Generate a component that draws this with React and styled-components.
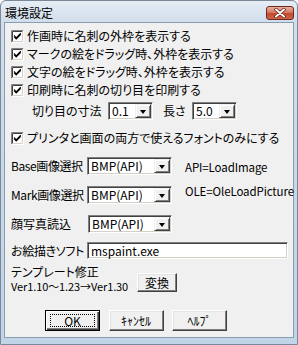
import React from 'react';
import styled, { createGlobalStyle } from 'styled-components';

const Global = createGlobalStyle`
  html, body { margin: 0; padding: 0; }
  body { width: 298px; height: 345px; overflow: hidden; background: #fff; }
`;

const Window = styled.div`
  width: 298px;
  height: 345px;
  box-sizing: border-box;
  display: flex;
  flex-direction: column;
  border: 1px solid #7a8899;
  border-radius: 6px 6px 0 0;
  background: linear-gradient(to bottom, #e6edf5 0px, #d2deeb 20px, #c6d7e9 60%, #c2d4e8 100%);
  font-family: "Noto Sans CJK JP", sans-serif;
  font-size: 12px;
  color: #000;
  font-feature-settings: "palt";
  overflow: hidden;
`;

const TitleBar = styled.div`
  height: 21px;
  flex: none;
  display: flex;
  align-items: center;
  justify-content: space-between;
  padding: 0 3px 0 4px;
`;

const Title = styled.span`
  font-size: 12px;
  line-height: 14px;
  padding-top: 3px;
  color: #000;
`;

const CloseBtn = styled.div`
  width: 28px;
  height: 14px;
  margin-top: 2px;
  box-sizing: border-box;
  border: 1px solid #6b2a1c;
  border-radius: 3px;
  background: linear-gradient(to bottom, #e8b0a0 0%, #d77a62 45%, #c24a2e 55%, #d0654a 100%);
  display: flex;
  align-items: center;
  justify-content: center;
`;

const Client = styled.div`
  flex: 1;
  margin: 0 3px 6px 3px;
  border: 1px solid #8a9cb0;
  background: #f0f0f0;
  display: flex;
  flex-direction: column;
  padding: 4px 0 0 6px;
`;

const CheckRow = styled.label`
  height: 18px;
  display: flex;
  align-items: center;
  gap: 3px;
  line-height: 14px;
  margin-top: ${p => p.mt || 0}px;
  white-space: nowrap;
`;

const Box = styled.span`
  width: 13px;
  height: 13px;
  flex: none;
  display: block;
`;

const Row = styled.div`
  display: flex;
  align-items: center;
  height: ${p => p.h || 18}px;
  margin-top: ${p => p.mt || 0}px;
  padding-left: ${p => p.pl || 0}px;
  white-space: nowrap;
`;

const Label = styled.span`
  width: ${p => p.w}px;
  margin-left: ${p => p.ml || 0}px;
  flex: none;
  line-height: 14px;
  letter-spacing: ${p => p.ls || 0}px;
`;

const Combo = styled.div`
  width: ${p => p.w}px;
  height: 18px;
  flex: none;
  box-sizing: border-box;
  border-style: solid;
  border-width: 1px;
  border-color: #808080 #fff #fff #808080;
  box-shadow: inset 1px 1px 0 #404040, inset -1px -1px 0 #d4d0c8;
  background: #fff;
  display: flex;
  align-items: stretch;
  padding: 1px;
`;

const ComboText = styled.span`
  flex: 1;
  padding-left: 2px;
  line-height: 14px;
  font-size: 12px;
`;

const ComboButton = styled.span`
  width: 16px;
  flex: none;
  box-sizing: border-box;
  background: #f0f0f0;
  border-style: solid;
  border-width: 1px;
  border-color: #f0f0f0 #404040 #404040 #f0f0f0;
  box-shadow: inset 1px 1px 0 #fff, inset -1px -1px 0 #808080;
  display: flex;
  align-items: center;
  justify-content: center;
`;

const Arrow = styled.span`
  width: 0;
  height: 0;
  border-left: 3.5px solid transparent;
  border-right: 3.5px solid transparent;
  border-top: 4px solid #000;
  margin-top: 1px;
`;

const Note = styled.span`
  margin-left: 13px;
  font-size: 11.5px;
  letter-spacing: -0.1px;
  line-height: 14px;
  position: relative;
  top: ${p => p.dy || 0}px;
`;

const TextInput = styled.div`
  width: ${p => p.w}px;
  height: 17px;
  box-sizing: border-box;
  border-style: solid;
  border-width: 1px;
  border-color: #808080 #fff #fff #808080;
  box-shadow: inset 1px 1px 0 #404040, inset -1px -1px 0 #d4d0c8;
  background: #fff;
  padding: 1px 3px;
  line-height: 13px;
`;

const TemplateBlock = styled.div`
  display: flex;
  margin-top: 6px;
`;

const TemplateText = styled.div`
  width: 126px;
  flex: none;
  line-height: 14px;
  white-space: nowrap;
`;

const VersionLine = styled.div`
  font-size: 11px;
  letter-spacing: -0.1px;
`;

const Button = styled.button`
  width: ${p => p.w || 55}px;
  height: ${p => p.h || 21}px;
  box-sizing: border-box;
  font-family: "Noto Sans CJK JP", sans-serif;
  font-feature-settings: "palt";
  font-size: 12px;
  line-height: 14px;
  color: #000;
  padding: 0;
  margin: 0;
  background: #f0f0f0;
  border-style: solid;
  border-width: 1px;
  border-color: #fff #404040 #404040 #fff;
  box-shadow: inset -1px -1px 0 #808080, inset 1px 1px 0 #e3e3e3;
  position: relative;
  flex: none;
  ${p => p.primary && `
    border: 1px solid #000;
    box-shadow: inset 1px 1px 0 #fff, inset -1px -1px 0 #404040, inset -2px -2px 0 #808080;
    &::after {
      content: "";
      position: absolute;
      left: 4px; top: 3px; right: 4px; bottom: 3px;
      border: 1px dotted #000;
    }
  `}
`;

const ConvertButton = styled(Button)`
  margin-top: 8px;
`;

const ButtonRow = styled.div`
  display: flex;
  gap: 8.5px;
  margin-top: 17px;
  padding-left: 34px;
`;

function CheckIcon() {
  return (
    <Box>
      <svg width="13" height="13" viewBox="0 0 13 13">
        <rect x="0" y="0" width="13" height="13" fill="#fff" />
        <path d="M0.5 12.5V0.5H12.5" stroke="#808080" fill="none" />
        <path d="M1.5 11.5V1.5H11.5" stroke="#404040" fill="none" />
        <path d="M0.5 12.5H12.5V0.5" stroke="#ffffff" fill="none" />
        <path d="M1.5 11.5H11.5V1.5" stroke="#d4d0c8" fill="none" />
        <path d="M3 5.5 L5.2 7.8 L9.8 3.2 M3 6.6 L5.2 8.9 L9.8 4.3" stroke="#000" strokeWidth="1.1" fill="none" />
      </svg>
    </Box>
  );
}

function Check({ children, mt }) {
  return (
    <CheckRow mt={mt}>
      <CheckIcon />
      <span>{children}</span>
    </CheckRow>
  );
}

function Select({ w, value }) {
  return (
    <Combo w={w}>
      <ComboText>{value}</ComboText>
      <ComboButton><Arrow /></ComboButton>
    </Combo>
  );
}

export default function App() {
  return (
    <>
      <Global />
      <Window>
        <TitleBar>
          <Title>環境設定</Title>
          <CloseBtn>
            <svg width="14" height="10" viewBox="0 0 14 10">
              <path d="M3 1.5 L11 8.5 M11 1.5 L3 8.5" stroke="#5a1a10" strokeWidth="3.4" strokeLinecap="round" />
              <path d="M3 1.5 L11 8.5 M11 1.5 L3 8.5" stroke="#ffffff" strokeWidth="2" strokeLinecap="round" />
            </svg>
          </CloseBtn>
        </TitleBar>
        <Client>
          <Check>作画時に名刺の外枠を表示する</Check>
          <Check>マークの絵をドラッグ時、外枠を表示する</Check>
          <Check>文字の絵をドラッグ時、外枠を表示する</Check>
          <Check>印刷時に名刺の切り目を印刷する</Check>
          <Row mt={3} pl={21}>
            <Label w={76}>切り目の寸法</Label>
            <Select w={45} value="0.1" />
            <Label w={29} ml={10}>長さ</Label>
            <Select w={45} value="5.0" />
          </Row>
          <Check mt={9}>プリンタと画面の両方で使えるフォントのみにする</Check>
          <Row mt={10}>
            <Label w={76} ls={-0.4}>Base画像選択</Label>
            <Select w={85} value="BMP(API)" />
            <Note dy={1}>API=LoadImage</Note>
          </Row>
          <Row mt={11}>
            <Label w={76} ls={-0.4}>Mark画像選択</Label>
            <Select w={85} value="BMP(API)" />
            <Note dy={-4}>OLE=OleLoadPicture</Note>
          </Row>
          <Row mt={11}>
            <Label w={77}>顔写真読込</Label>
            <Select w={84} value="BMP(API)" />
          </Row>
          <Row mt={9} h={17}>
            <Label w={76} ls={-0.3}>お絵描きソフト</Label>
            <TextInput w={201}>mspaint.exe</TextInput>
          </Row>
          <TemplateBlock>
            <TemplateText>
              <div>テンプレート修正</div>
              <VersionLine>Ver1.10～1.23→Ver1.30</VersionLine>
            </TemplateText>
            <ConvertButton w={40} h={19}>変換</ConvertButton>
          </TemplateBlock>
          <ButtonRow>
            <Button primary>OK</Button>
            <Button>ｷｬﾝｾﾙ</Button>
            <Button>ﾍﾙﾌﾟ</Button>
          </ButtonRow>
        </Client>
      </Window>
    </>
  );
}
